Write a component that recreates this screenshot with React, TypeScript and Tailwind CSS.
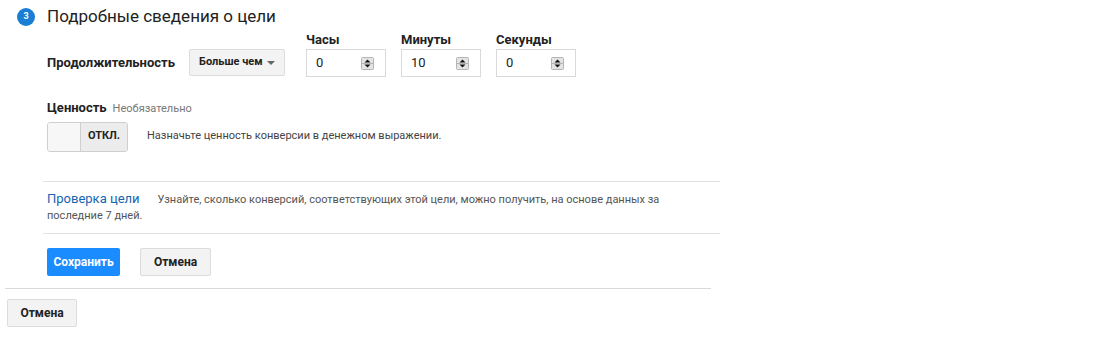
import React from "react";

const timeFields = [
  { label: "Часы", value: "0" },
  { label: "Минуты", value: "10" },
  { label: "Секунды", value: "0" },
];

const Spinner = () => (
  <svg width="13" height="13" viewBox="0 0 13 13" className="shrink-0">
    <rect x="0.5" y="0.5" width="12" height="12" rx="1" fill="#e4e4e4" stroke="#b5b5b5" />
    <line x1="1" y1="6.5" x2="12" y2="6.5" stroke="#b5b5b5" />
    <path d="M3.5 5.5 L6.5 2.5 L9.5 5.5 Z" fill="#111" />
    <path d="M3.5 7.5 L6.5 10.5 L9.5 7.5 Z" fill="#111" />
  </svg>
);

const GrayButton = ({ children, className = "" }: { children: React.ReactNode; className?: string }) => (
  <button
    className={`h-[28px] rounded-[2px] border border-[#dcdcdc] bg-[#f3f3f3] text-[12px] font-bold text-[#222] ${className}`}
  >
    {children}
  </button>
);

export default function App() {
  return (
    <div className="h-[338px] w-[1100px] bg-white font-['Roboto',sans-serif] text-[#222]">
      {/* step header */}
      <div className="flex items-center pl-[17px] pt-[7px]">
        <div className="flex h-[18px] w-[18px] items-center justify-center rounded-full bg-[#1a7fd4] text-[9px] font-bold text-white">
          3
        </div>
        <h2 className="ml-[12px] text-[17px] leading-[19px] text-[#222]">Подробные сведения о цели</h2>
      </div>

      <div className="ml-[43px] w-[677px]">
        {/* duration */}
        <div className="mt-[6px] flex items-end pl-1">
          <div className="flex h-[28px] w-[142px] items-center text-[13px] font-bold">Продолжительность</div>
          <button className="mb-[1px] flex h-[27px] w-[96px] items-center justify-between rounded-[2px] border border-[#dcdcdc] bg-[#f3f3f3] pl-[9px] pr-[9px] text-[11px] font-bold text-[#222]">
            Больше чем
            <svg width="8" height="4" viewBox="0 0 8 4">
              <path d="M0 0 L8 0 L4 4 Z" fill="#666" />
            </svg>
          </button>
          <div className="ml-[21px] flex gap-[15px]">
            {timeFields.map((f) => (
              <div key={f.label} className="flex flex-col">
                <span className="text-[13px] font-bold leading-[16px]">{f.label}</span>
                <div className="mt-[1px] flex h-[28px] w-[80px] items-center justify-between border border-[#d9d9d9] bg-white pl-[9px] pr-[11px]">
                  <span className="text-[13px] text-[#222]">{f.value}</span>
                  <Spinner />
                </div>
              </div>
            ))}
          </div>
        </div>

        {/* value */}
        <div className="mt-[21px] flex items-baseline pl-1">
          <span className="text-[13px] font-bold">Ценность</span>
          <span className="ml-[6px] text-[11px] text-[#777]">Необязательно</span>
        </div>
        <div className="mt-[4px] flex items-center pl-1">
          <div className="flex h-[30px] w-[81px] overflow-hidden rounded-[3px] border border-[#cfcfcf] bg-[#f4f4f4]">
            <div className="w-[33px] border-r border-[#cfcfcf] bg-[#f7f7f7]" />
            <div className="flex flex-1 items-center justify-center bg-[#ececec] text-[11px] font-bold text-[#222]">
              ОТКЛ.
            </div>
          </div>
          <span className="ml-[19px] text-[11px] text-[#444]">Назначьте ценность конверсии в денежном выражении.</span>
        </div>

        {/* goal verification */}
        <div className="mt-[29px] border-t border-b border-[#e2e2e2] pb-[9px] pl-1 pt-[9px]">
          <p className="max-w-[640px] text-[11px] leading-[16px] text-[#555]">
            <span className="mr-[18px] align-baseline text-[13px] text-[#1565b0]">Проверка цели</span>
            <span>
              Узнайте, сколько конверсий, соответствующих этой цели, можно получить, на основе данных за последние 7 дней.
            </span>
          </p>
        </div>

        {/* actions */}
        <div className="mt-[14px] flex items-center gap-[20px] pl-1">
          <button className="h-[28px] w-[73px] rounded-[2px] bg-[#1a8cff] text-[12px] font-bold text-white">Сохранить</button>
          <GrayButton className="w-[71px]">Отмена</GrayButton>
        </div>
      </div>

      <div className="ml-[5px] mt-[12px] w-[706px] border-t border-[#d9d9d9]" />
      <div className="pl-[7px] pt-[10px]">
        <GrayButton className="w-[70px]">Отмена</GrayButton>
      </div>
    </div>
  );
}
